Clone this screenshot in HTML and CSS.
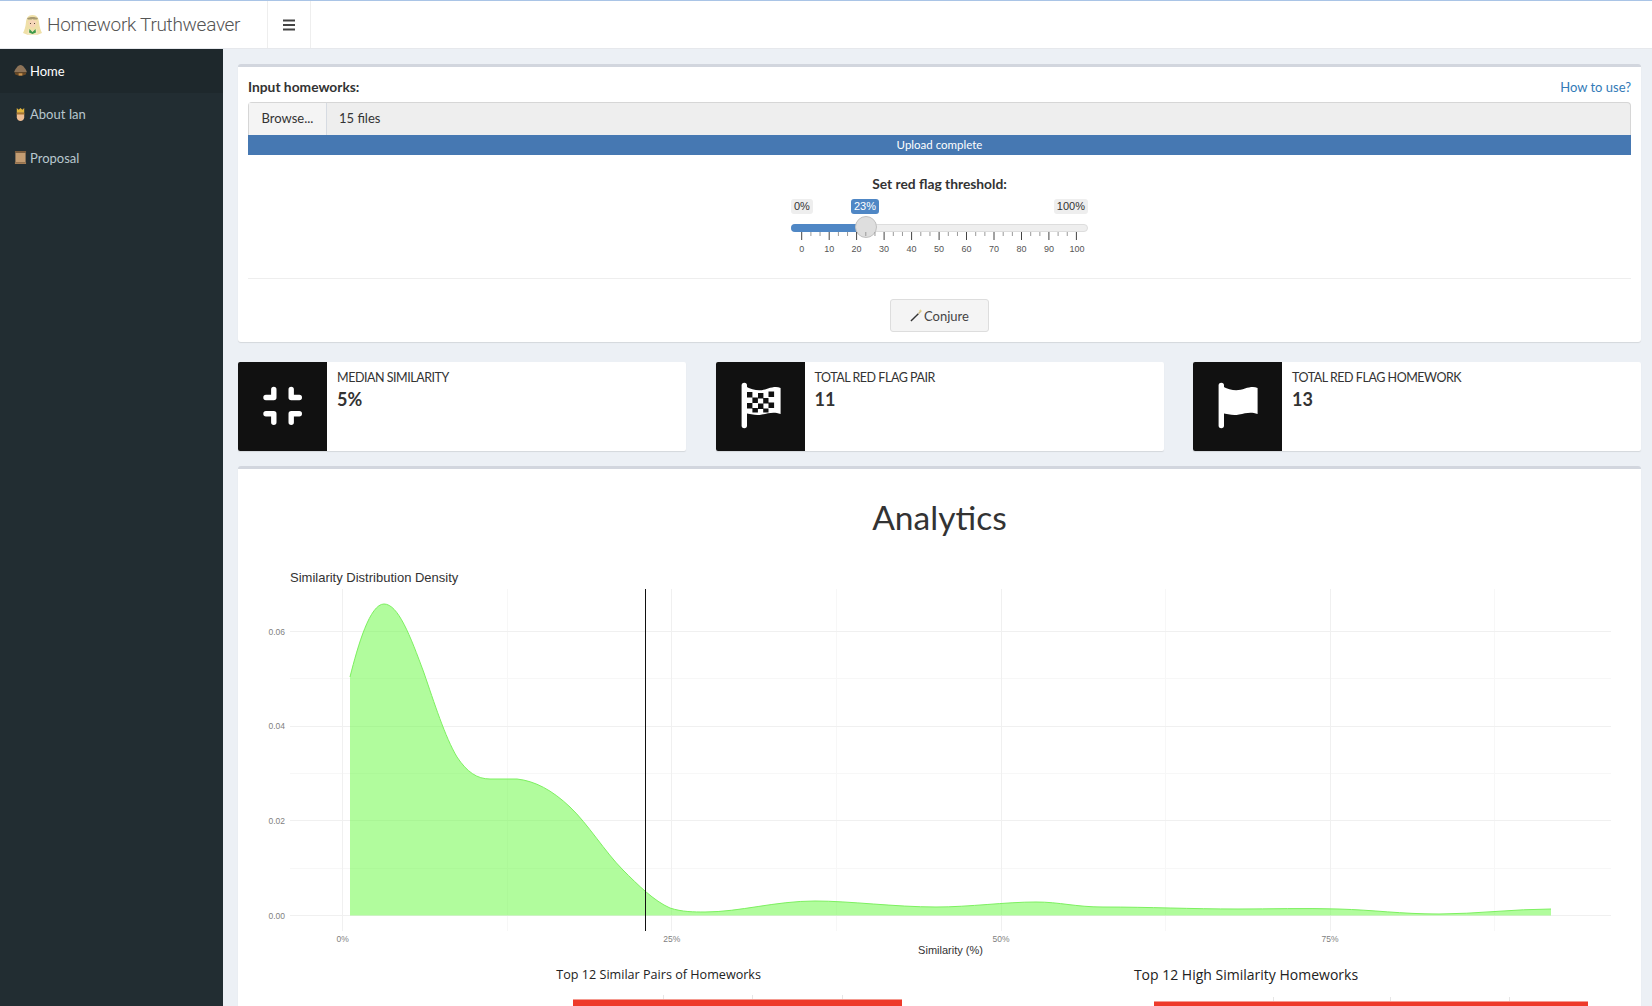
FILE: index.html
```html
<!doctype html>
<html lang="en">
<head>
    <meta charset="UTF-8">
    <title>Homework Truthweaver</title>
    <link rel="stylesheet" href="styles.css">
</head>
<body>
    <header class="topBar">
        <div class="brand">
            <svg class="brandIcon" viewBox="0 0 19 20">
                <path d="M9.500 0C5 0 3.500 3 3 7C2.500 12 1.500 15 0 18L5 20H14L19 18C17.500 15 16.500 12 16 7C15.500 3 14 0 9.500 0Z" fill="#efe0a8"/>
                <path d="M4 3.500C6 1.500 13 1.500 15 3.500L14 4.500H5Z" fill="#a89a72"/>
                <path d="M5.500 6C7 6 9 5 9.500 4C10.500 5 12 6 13.500 6C13.500 10 12 12.500 9.500 12.500C7 12.500 5.500 10 5.500 6Z" fill="#f6d6b8"/>
                <path d="M7 8h1v1h-1zM11 8h1v1h-1z" fill="#5a4a3a"/>
                <path d="M5.500 14L9.500 16L13.500 14L15 20H4Z" fill="#f3e7c0"/>
                <path d="M6.500 14L9.500 17L12.500 14L13 17.500L9.500 19L6 17.500Z" fill="#3f9a4a"/>
            </svg>
            <span class="brandName">Homework Truthweaver</span>
        </div>
        <button class="menuToggle">
            <svg viewBox="0 0 12 12" width="12" height="12"><path d="M0 1.500H12M0 6H12M0 10.500H12" stroke="#444" stroke-width="2"/></svg>
        </button>
    </header>

    <div class="pageBody">
        <nav class="sideNav">
            <a class="navItem navActive">
                <svg class="navIcon" viewBox="0 0 14 14">
                    <path d="M0 9C1 6 4 1 7 1C10 1 13 6 14 9Z" fill="#8d7358"/>
                    <path d="M1 9H13V11C11 13 3 13 1 11Z" fill="#6b4a26"/>
                    <path d="M5 10H9V12.500H5Z" fill="#c8924f"/>
                </svg>
                Home
            </a>
            <a class="navItem">
                <svg class="navIcon" viewBox="0 0 14 14">
                    <path d="M3 0L5 2L7 0L9 2L11 0V5H3Z" fill="#e0b33c"/>
                    <path d="M3 5H11V10C11 12.500 9 14 7 14C5 14 3 12.500 3 10Z" fill="#eebd94"/>
                    <path d="M3 5H11V7H3Z" fill="#a8752e"/>
                </svg>
                About Ian
            </a>
            <a class="navItem">
                <svg class="navIcon" viewBox="0 0 14 14">
                    <path d="M1 0H13V2H1Z" fill="#7d5c3b"/>
                    <path d="M1.500 2H12.500V12H1.500Z" fill="#c39c72"/>
                    <path d="M1 12H13V14H1Z" fill="#a37c55"/>
                </svg>
                Proposal
            </a>
        </nav>

        <main class="content">
            <section class="box inputBox">
                <div class="inputHead">
                    <label class="fieldLabel">Input homeworks:</label>
                    <a class="helpLink">How to use?</a>
                </div>
                <div class="fileRow">
                    <span class="browseBtn">Browse...</span>
                    <span class="fileName">15 files</span>
                </div>
                <div class="uploadBar">Upload complete</div>

                <div class="fieldLabel thresholdLabel">Set red flag threshold:</div>
                <div class="slider">
                    <div class="sliderBadges">
                        <span class="badge">0%</span>
                        <span class="badge">100%</span>
                    </div>
                    <span class="badge badgeValue">23%</span>
                    <div class="sliderTrack"><div class="sliderFill"></div></div>
                    <span class="sliderHandle"></span>
                    <svg class="sliderScale" width="297" height="24" viewBox="0 0 297 24">
                        <path d="M19.900 0v4m9.160-4v4M47.400 0v4m9.160-4v4M74.800 0v4m9.160-4v4M102.300 0v4m9.160-4v4M129.800 0v4m9.160-4v4M157.300 0v4m9.160-4v4M184.700 0v4m9.160-4v4M212.200 0v4m9.160-4v4M239.700 0v4m9.160-4v4M267.100 0v4m9.160-4v4" stroke="#999"/>
                        <path d="M10.700 0v8M38.200 0v8M65.600 0v8M93.100 0v8M120.600 0v8M148.100 0v8M175.500 0v8M203 0v8M230.500 0v8M257.900 0v8M285.400 0v8" stroke="#444"/>
                        <g class="scaleText">
                            <text x="10.700" y="20">0</text>
                            <text x="38.200" y="20">10</text>
                            <text x="65.600" y="20">20</text>
                            <text x="93.100" y="20">30</text>
                            <text x="120.600" y="20">40</text>
                            <text x="148.100" y="20">50</text>
                            <text x="175.500" y="20">60</text>
                            <text x="203" y="20">70</text>
                            <text x="230.500" y="20">80</text>
                            <text x="257.900" y="20">90</text>
                            <text x="286" y="20">100</text>
                        </g>
                    </svg>
                </div>
                <hr class="divider">
                <div class="actionRow">
                    <button class="conjureBtn">
                        <svg viewBox="0 0 14 14" width="13" height="13">
                            <path d="M1 13L9 5" stroke="#333" stroke-width="1.500"/>
                            <path d="M9 5L12 2" stroke="#c9b98a" stroke-width="1.500"/>
                            <path d="M11 0L11.500 1.500L13 2L11.500 2.500L11 4L10.500 2.500L9 2L10.500 1.500Z" fill="#e3d07f"/>
                        </svg>
                        Conjure
                    </button>
                </div>
            </section>

            <section class="infoRow">
                <div class="infoBox">
                    <div class="infoIcon">
                        <svg viewBox="0 0 89 89" width="89" height="89">
                            <path d="M28 35.500H35.800V27.400M53.200 27.400V35.500H61.300M28 51.700H35.800V60.300M53.200 60.300V51.700H61.300" fill="none" stroke="#fff" stroke-width="5.400" stroke-linecap="round" stroke-linejoin="round"/>
                        </svg>
                    </div>
                    <div class="infoText">
                        <span class="infoLabel">Median similarity</span>
                        <span class="infoValue">5%</span>
                    </div>
                </div>
                <div class="infoBox">
                    <div class="infoIcon">
                        <svg viewBox="0 0 89 89" width="89" height="89">
                            <path d="M28.300 23.500V63.500" stroke="#fff" stroke-width="5.400" stroke-linecap="round"/>
                            <path d="M29 24C38 29 45 29 52 26.500C57 25 61 24.500 64.600 26V52C58 49.500 53 51 46 52.500C40 54 35 52 29 51Z" fill="#fff"/>
                            <path d="M31 30h5.400v5.400h-5.400zM42 31h5.400v5.400h-5.400zM52.500 29.500h5.600v5.400h-5.600zM36.400 35.500h5.500v5.400h-5.500zM47.200 36h5.300v5.400h-5.300zM31 41h5.400v5.400h-5.400zM42 41.500h5.400v5.400h-5.400zM52.500 40.500h5.600v5.400h-5.600zM36.400 46h5.500v4.500h-5.500zM47.200 46.500h5.300v4h-5.300z" fill="#111"/>
                        </svg>
                    </div>
                    <div class="infoText">
                        <span class="infoLabel">Total red flag pair</span>
                        <span class="infoValue">11</span>
                    </div>
                </div>
                <div class="infoBox">
                    <div class="infoIcon">
                        <svg viewBox="0 0 89 89" width="89" height="89">
                            <path d="M28.300 23.500V63.500" stroke="#fff" stroke-width="5.400" stroke-linecap="round"/>
                            <path d="M29 24C38 29 45 29 52 26.500C57 25 61 24.500 64.600 26V52C58 49.500 53 51 46 52.500C40 54 35 52 29 51Z" fill="#fff"/>
                        </svg>
                    </div>
                    <div class="infoText">
                        <span class="infoLabel">Total red flag homework</span>
                        <span class="infoValue">13</span>
                    </div>
                </div>
            </section>

            <section class="box analyticsBox">
                <h1 class="analyticsTitle">Analytics</h1>
                <svg class="densityChart" viewBox="238 560 1403 400" width="1403" height="400">
                    <text class="chartTitle" x="290" y="582">Similarity Distribution Density</text>
                    <g class="gridMinor">
                        <path d="M290 678.500H1611M290 773.500H1611M290 868.500H1611"/>
                        <path d="M507.500 589V931M836.500 589V931M1165.500 589V931M1494.500 589V931"/>
                    </g>
                    <g class="gridMajor">
                        <path d="M290 631.500H1611M290 726.500H1611M290 820.500H1611M290 915.500H1611"/>
                        <path d="M342.500 589V931M671.500 589V931M1001.500 589V931M1330.500 589V931"/>
                    </g>
                    <path class="densityFill" d="M350 677C358 645 370 604 384 604C398 604 410 635 424 673C434 702 445 737 457 757C467 772 477 779 490 779C499 779 508 779 517 779C535 781 552 790 570 807C588 824 605 852 623 870C638 885 654 901 670 908C682 912 694 912 705 912C740 912 775 901 815 901C850 901 895 907 936 907C970 907 1005 902 1036 902C1060 902 1075 907 1103 907C1150 907 1190 909 1238 909C1270 909 1305 908 1338 909C1375 910 1400 914 1439 914C1475 914 1515 909 1551 909V915.500H350Z"/>
                    <path class="densityLine" d="M350 677C358 645 370 604 384 604C398 604 410 635 424 673C434 702 445 737 457 757C467 772 477 779 490 779C499 779 508 779 517 779C535 781 552 790 570 807C588 824 605 852 623 870C638 885 654 901 670 908C682 912 694 912 705 912C740 912 775 901 815 901C850 901 895 907 936 907C970 907 1005 902 1036 902C1060 902 1075 907 1103 907C1150 907 1190 909 1238 909C1270 909 1305 908 1338 909C1375 910 1400 914 1439 914C1475 914 1515 909 1551 909"/>
                    <path class="thresholdLine" d="M645.500 589V931"/>
                    <g class="yTicks">
                        <text x="285" y="635">0.06</text>
                        <text x="285" y="729">0.04</text>
                        <text x="285" y="824">0.02</text>
                        <text x="285" y="918.500">0.00</text>
                    </g>
                    <g class="xTicks">
                        <text x="342.700" y="942">0%</text>
                        <text x="671.700" y="942">25%</text>
                        <text x="1001" y="942">50%</text>
                        <text x="1330" y="942">75%</text>
                    </g>
                    <text class="axisTitle" x="950.500" y="954">Similarity (%)</text>
                </svg>
                <div class="barCharts">
                    <div class="barChart barLeft">
                        <div class="barTitle">Top 12 Similar Pairs of Homeworks</div>
                        <div class="barPlot">
                            <div class="bar"></div>
                        </div>
                    </div>
                    <div class="barChart barRight">
                        <div class="barTitle">Top 12 High Similarity Homeworks</div>
                        <div class="barPlot">
                            <div class="bar"></div>
                        </div>
                    </div>
                </div>
            </section>
        </main>
    </div>
</body>
</html>
```

FILE: styles.css
```css
html, body {
    margin: 0;
    height: 100%;
    overflow: hidden;
}

body {
    background-color: #ecf0f5;
    font-family: "Lato", "Open Sans", sans-serif;
    font-size: 13px;
    color: #333;
}

.topBar {
    display: flex;
    height: 47px;
    background-color: #fff;
    border-top: 1px solid #a9c4e6;
    border-bottom: 1px solid #e6e8ec;
}

.brand {
    display: flex;
    align-items: center;
    width: 267px;
    padding-left: 23px;
    box-sizing: border-box;
}

.brandIcon {
    width: 19px;
    height: 20px;
    margin-right: 5px;
}

.brandName {
    font-family: "Roboto", "Liberation Sans", sans-serif;
    font-weight: 300;
    font-size: 19px;
    letter-spacing: -0.3px;
    color: #555;
}

.menuToggle {
    display: flex;
    align-items: center;
    justify-content: center;
    width: 44px;
    padding: 0;
    background: none;
    border: 0;
    border-left: 1px solid #eee;
    border-right: 1px solid #eee;
}

.pageBody {
    display: flex;
    height: 957px;
}

.sideNav {
    width: 223px;
    flex-shrink: 0;
    background-color: #222d32;
}

.navItem {
    display: flex;
    align-items: center;
    height: 43.600px;
    padding-left: 14px;
    box-sizing: border-box;
    color: #b8c7ce;
}

.navActive {
    background-color: #1e282c;
    color: #fff;
}

.navIcon {
    width: 13px;
    height: 13px;
    margin-right: 3px;
}

.content {
    flex: 1;
    padding: 15px 11px 0 15px;
    min-width: 0;
    overflow: hidden;
}

.box {
    background-color: #fff;
    border-top: 3px solid #d2d6de;
    border-radius: 3px;
    box-shadow: 0 1px 1px rgba(0, 0, 0, 0.1);
}

.inputBox {
    height: 265px;
    padding: 10px 10px 0;
}

.inputHead {
    display: flex;
    justify-content: space-between;
    line-height: 20px;
    margin-bottom: 5px;
}

.fieldLabel {
    font-weight: 700;
    font-size: 13.800px;
}

.helpLink {
    color: #337ab7;
}

.fileRow {
    display: flex;
    height: 33px;
    line-height: 31px;
    box-sizing: border-box;
    border: 1px solid #d6d6d6;
    border-bottom: 0;
    background-color: #eee;
    border-radius: 4px 4px 0 0;
}

.browseBtn {
    width: 77px;
    text-align: center;
    background-color: #f4f4f4;
    border-right: 1px solid #d6dbe2;
}

.fileName {
    padding-left: 12px;
}

.uploadBar {
    height: 20px;
    line-height: 20px;
    background-color: #4678b2;
    color: #fff;
    font-size: 11.500px;
    text-align: center;
}

.thresholdLabel {
    margin-top: 19px;
    line-height: 20px;
    text-align: center;
}

.slider {
    position: relative;
    width: 297px;
    height: 66px;
    margin: 5px auto 0;
    font-family: "Liberation Sans", sans-serif;
}

.sliderBadges {
    display: flex;
    justify-content: space-between;
}

.badge {
    height: 15px;
    padding: 0 3px;
    line-height: 15px;
    font-size: 11px;
    background-color: #eee;
    border-radius: 3px;
    color: #333;
}

.badgeValue {
    position: absolute;
    left: 60px;
    top: 0;
    background-color: #4f87c5;
    color: #fff;
}

.sliderTrack {
    position: absolute;
    left: 0;
    right: 0;
    top: 25px;
    height: 8px;
    background-color: #eee;
    border: 1px solid #ddd;
    box-sizing: border-box;
    border-radius: 4px;
}

.sliderFill {
    width: 74px;
    height: 8px;
    margin: -1px;
    background-color: #4f87c5;
    border-radius: 4px 0 0 4px;
}

.sliderHandle {
    position: absolute;
    left: 63.500px;
    top: 17px;
    width: 22px;
    height: 22px;
    box-sizing: border-box;
    background-color: #dedede;
    border: 1px solid #c0c0c0;
    border-radius: 50%;
}

.sliderScale {
    position: absolute;
    left: 0;
    top: 33px;
}

.scaleText {
    font-size: 9px;
    fill: #555;
    text-anchor: middle;
}

.divider {
    margin: 13px 0 20px;
    border: 0;
    border-top: 1px solid #eee;
}

.actionRow {
    display: flex;
    justify-content: center;
}

.conjureBtn {
    display: flex;
    align-items: center;
    justify-content: center;
    gap: 1px;
    width: 99px;
    height: 33px;
    padding: 0;
    font-family: inherit;
    font-size: 13px;
    color: #444;
    background-color: #f4f4f4;
    border: 1px solid #ddd;
    border-radius: 3px;
}

.infoRow {
    display: flex;
    justify-content: space-between;
    margin: 20px 0 15px;
}

.infoBox {
    display: flex;
    width: 448px;
    height: 89px;
    background-color: #fff;
    border-radius: 2px;
    box-shadow: 0 1px 1px rgba(0, 0, 0, 0.1);
}

.infoIcon {
    width: 89px;
    height: 89px;
    background-color: #111;
    border-radius: 2px 0 0 2px;
}

.infoText {
    display: flex;
    flex-direction: column;
    padding: 7px 10px;
}

.infoLabel {
    line-height: 18px;
    font-size: 12.500px;
    letter-spacing: -0.47px;
    text-transform: uppercase;
    color: #333;
}

.infoValue {
    margin-top: 1px;
    font-size: 18px;
    line-height: 22px;
    font-weight: 700;
}

.analyticsBox {
    height: 600px;
    overflow: hidden;
}

.analyticsTitle {
    margin: 28px 0 0;
    height: 63px;
    line-height: 40px;
    font-size: 33.600px;
    font-weight: 400;
    text-align: center;
}

.densityChart {
    display: block;
    font-family: "Liberation Sans", sans-serif;
}

.chartTitle {
    font-size: 13px;
    fill: #333;
}

.gridMinor path {
    stroke: #f7f7f7;
    fill: none;
}

.gridMajor path {
    stroke: #f0f0f0;
    fill: none;
}

.densityFill {
    fill: rgba(100, 250, 60, 0.5);
}

.densityLine {
    fill: none;
    stroke: #7df060;
}

.thresholdLine {
    stroke: #111;
}

.yTicks {
    font-size: 8.500px;
    fill: #7f7f7f;
    text-anchor: end;
}

.xTicks {
    font-size: 8.500px;
    fill: #7f7f7f;
    text-anchor: middle;
}

.axisTitle {
    font-size: 11px;
    fill: #333;
    text-anchor: middle;
}

.barCharts {
    display: flex;
    margin-top: 3px;
    padding-left: 334.700px;
    height: 70px;
    font-family: "Open Sans", sans-serif;
}

.barLeft {
    width: 329px;
    margin-right: 252.300px;
}

.barRight {
    width: 434px;
}

.barTitle {
    height: 32px;
    line-height: 24px;
    font-size: 14px;
    color: #222;
    text-align: center;
    white-space: nowrap;
}

.barLeft .barTitle {
    margin-left: -157px;
    font-size: 12.600px;
}

.barRight .barTitle {
    margin-left: -250px;
}

.barPlot {
    height: 30px;
    padding-top: 4px;
    /* faint value gridlines that stick out above the bar */
    background-image: linear-gradient(#e6e6e6, #e6e6e6), linear-gradient(#e6e6e6, #e6e6e6), linear-gradient(#e6e6e6, #e6e6e6);
    background-size: 1px 6px;
    background-repeat: no-repeat;
    background-position: 27.400% 0, 54.600% 0, 82% 0;
}

.barRight .barPlot {
    margin-top: 2.300px;
}

.bar {
    height: 20px;
    background-color: #ee3a2a;
    border-top: 1px solid #f59a90;
    box-sizing: border-box;
}
```
